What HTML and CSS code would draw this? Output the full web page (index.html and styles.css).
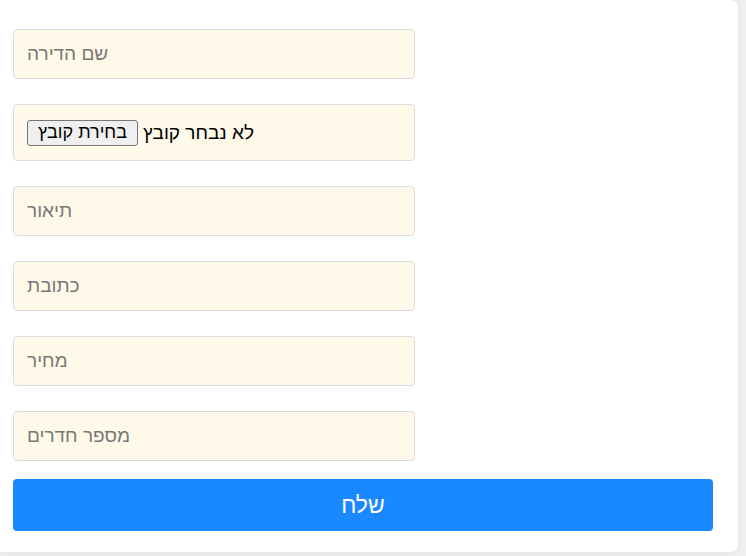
FILE: index.html
```html
<!DOCTYPE html>
<html lang="he">
<head>
<meta charset="utf-8">
<link rel="stylesheet" href="styles.css">
</head>
<body>
<div class="card">
  <form class="form">
    <input class="field" type="text" placeholder="שם הדירה">
    <div class="field file">
      <span class="file-btn">בחירת קובץ</span>
      <span class="file-text">לא נבחר קובץ</span>
    </div>
    <input class="field" type="text" placeholder="תיאור">
    <input class="field" type="text" placeholder="כתובת">
    <input class="field" type="text" placeholder="מחיר">
    <input class="field" type="text" placeholder="מספר חדרים">
    <button class="submit" type="button">שלח</button>
  </form>
</div>
</body>
</html>
```
FILE: styles.css
```css
html, body {
  margin: 0;
  padding: 0;
}
body {
  background: #f0f0f0;
  font-family: "Liberation Sans", Arial, sans-serif;
  width: 746px;
  height: 556px;
  overflow: hidden;
}
.card {
  width: 738px;
  height: 552px;
  background: #ffffff;
  border-radius: 0 8px 8px 0;
  box-shadow: 0 0 8px rgba(0, 0, 0, 0.07);
  box-sizing: border-box;
  padding: 29px 13px 0 13px;
}
.form {
  display: flex;
  flex-direction: column;
  align-items: flex-start;
}
.field {
  width: 402px;
  height: 50px;
  box-sizing: border-box;
  margin: 0 0 25px 0;
  padding: 0 13px;
  background: #fff9e9;
  border: 1px solid #dcdcdc;
  border-radius: 4px;
  font-family: "Liberation Sans", Arial, sans-serif;
  font-size: 19px;
  color: #222;
  outline: none;
}
.field::placeholder {
  color: #777777;
}
.file {
  height: 57px;
  display: flex;
  align-items: center;
  gap: 5px;
}
.file-btn {
  display: inline-block;
  box-sizing: border-box;
  height: 26px;
  line-height: 23px;
  padding: 0 10px;
  background: #efefef;
  border: 1px solid #767676;
  border-radius: 3px;
  font-size: 18px;
  color: #000;
}
.file-text {
  font-size: 19px;
  color: #000;
}
.form .field:nth-child(6) {
  margin-bottom: 18px;
}
.submit {
  width: 700px;
  height: 52px;
  border: none;
  border-radius: 4px;
  background: #1a88ff;
  color: #ffffff;
  font-family: "Liberation Sans", Arial, sans-serif;
  font-size: 23px;
  cursor: pointer;
}
```
